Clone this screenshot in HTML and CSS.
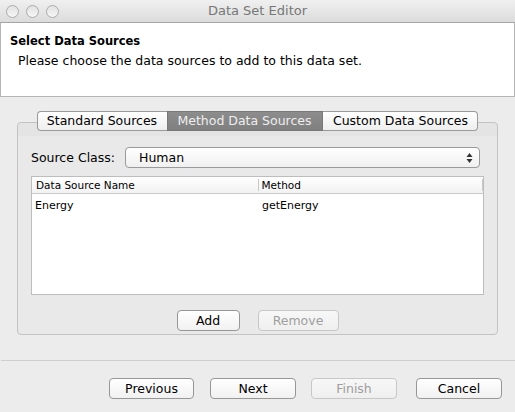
FILE: index.html
```html
<!DOCTYPE html>
<html>
<head>
<meta charset="utf-8">
<link rel="stylesheet" href="styles.css">
</head>
<body>
<div class="window">
  <div class="titlebar">
    <div class="lights">
      <span class="light"></span><span class="light"></span><span class="light"></span>
    </div>
    <div class="title">Data Set Editor</div>
  </div>
  <div class="header">
    <div class="h-title">Select Data Sources</div>
    <div class="h-sub">Please choose the data sources to add to this data set.</div>
  </div>
  <div class="content">
    <div class="tabs">
      <div class="tab tab-first">Standard Sources</div>
      <div class="tab tab-active">Method Data Sources</div>
      <div class="tab tab-last">Custom Data Sources</div>
    </div>
    <div class="panel">
      <div class="row-class">
        <span class="lbl">Source Class:</span>
        <div class="combo">
          <span class="combo-text">Human</span>
          <svg class="combo-arrows" width="7" height="12" viewBox="0 0 7 12">
            <path d="M3.5 1 L6.5 5 L0.5 5 Z" fill="#333"/>
            <path d="M3.5 11 L6.5 7 L0.5 7 Z" fill="#333"/>
          </svg>
        </div>
      </div>
      <div class="table">
        <div class="thead">
          <div class="th th-name">Data Source Name</div>
          <div class="th th-method">Method</div>
        </div>
        <div class="tr">
          <div class="td td-name">Energy</div>
          <div class="td td-method">getEnergy</div>
        </div>
      </div>
      <div class="panel-buttons">
        <button class="btn btn-add">Add</button>
        <button class="btn btn-remove disabled">Remove</button>
      </div>
    </div>
  </div>
  <div class="separator"></div>
  <div class="footer">
    <button class="btn btn-prev">Previous</button>
    <button class="btn btn-next">Next</button>
    <button class="btn btn-finish disabled">Finish</button>
    <button class="btn btn-cancel">Cancel</button>
  </div>
</div>
</body>
</html>
```

FILE: styles.css
```css
html, body {
  margin: 0;
  padding: 0;
  background: #ececec;
}
body {
  font-family: "DejaVu Sans", "Liberation Sans", sans-serif;
  font-size: 12px;
  color: #000;
}
.window {
  width: 515px;
  height: 412px;
  display: flex;
  flex-direction: column;
  background: #ececec;
  overflow: hidden;
}
.titlebar {
  flex: none;
  display: flex;
  align-items: center;
  position: relative;
  background: linear-gradient(#f0f0f0, #dcdcdc);
  border-bottom: 1px solid #a6a6a6;
  box-sizing: border-box;
  height: 23px;
}
.lights {
  display: flex;
  gap: 7px;
  padding-left: 6px;
  padding-top: 1px;
}
.light {
  width: 11px;
  height: 11px;
  border-radius: 50%;
  border: 1px solid #ababab;
  background: linear-gradient(#e2e2e2, #f6f6f6);
}
.title {
  position: absolute;
  left: 0;
  right: 0;
  text-align: center;
  font-size: 13px;
  color: #777;
  top: 3px;
}
.header {
  flex: none;
  background: #fff;
  border-left: 1px solid #b5b5b5;
  border-right: 1px solid #b5b5b5;
  border-bottom: 1px solid #b5b5b5;
  box-sizing: border-box;
  height: 74px;
  padding-top: 10px;
}
.h-title {
  font-weight: bold;
  font-size: 11.5px;
  padding-left: 9px;
  line-height: 16px;
}
.h-sub {
  font-size: 12.5px;
  padding-left: 17px;
  padding-top: 4px;
  line-height: 16px;
}
.content {
  flex: none;
  padding: 14px 17px 0 17px;
}
.tabs {
  display: flex;
  justify-content: center;
  height: 20px;
  margin-bottom: -9px;
  position: relative;
  z-index: 1;
  padding-right: 1px;
}
.tab {
  height: 20px;
  box-sizing: border-box;
  border: 1px solid #9a9a9a;
  background: linear-gradient(#ffffff, #eeeeee);
  font-size: 12.5px;
  line-height: 18px;
  text-align: center;
}
.tab-first {
  width: 130px;
  border-radius: 4px 0 0 4px;
  border-right: none;
}
.tab-active {
  width: 156px;
  background: linear-gradient(#8d8d8d, #7f7f7f);
  border-color: #787878;
  color: #eeeeee;
}
.tab-last {
  width: 155px;
  border-left: none;
  border-radius: 0 4px 4px 0;
  padding-left: 2px;
}
.panel {
  height: 213px;
  box-sizing: border-box;
  border: 1px solid #c3c3c3;
  border-radius: 4px;
  background: linear-gradient(#e4e4e4 0, #e4e4e4 13px, #e9e9e9 13px);
  padding: 24px 13px 0 13px;
  display: flex;
  flex-direction: column;
}
.row-class {
  display: flex;
  align-items: center;
  height: 21px;
}
.lbl {
  font-size: 12.5px;
  width: 94px;
}
.combo {
  width: 355px;
  height: 21px;
  box-sizing: border-box;
  border: 1px solid #9a9a9a;
  border-radius: 4px;
  background: linear-gradient(#ffffff, #f0f0f0);
  display: flex;
  align-items: center;
  justify-content: space-between;
  padding: 0 6px 0 13px;
  font-size: 12.5px;
}
.combo-arrows {
  display: block;
}
.table {
  margin-top: 8px;
  width: 453px;
  height: 119px;
  box-sizing: border-box;
  background: #fff;
  border: 1px solid #bdbdbd;
}
.thead {
  display: flex;
  height: 17px;
  box-sizing: border-box;
  border-bottom: 1px solid #c8c8c8;
  background: linear-gradient(#ffffff, #f2f2f2);
  font-size: 10.5px;
}
.th-name {
  width: 223px;
  padding-left: 4px;
  border-right: 1px solid #c8c8c8;
  margin: 2px 0;
  line-height: 12px;
}
.th-method {
  width: 222px;
  padding-left: 3px;
  border-right: 1px solid #c8c8c8;
  margin: 2px 0;
  line-height: 12px;
}
.tr {
  display: flex;
  font-size: 11px;
  line-height: 22px;
  padding-top: 1px;
}
.td-name {
  width: 224px;
  padding-left: 3px;
}
.td-method {
  padding-left: 3px;
}
.panel-buttons {
  display: flex;
  justify-content: center;
  gap: 18px;
  margin-top: 15px;
}
.btn {
  height: 21px;
  box-sizing: border-box;
  border: 1px solid #979797;
  border-radius: 4px;
  background: linear-gradient(#ffffff, #f1f1f1);
  font-family: "DejaVu Sans", "Liberation Sans", sans-serif;
  font-size: 12.5px;
  color: #000;
  padding: 0;
  line-height: 18px;
}
.btn.disabled {
  color: #9e9e9e;
  border-color: #c7c7c7;
  background: linear-gradient(#f7f7f7, #efefef);
}
.btn-add { width: 63px; }
.btn-remove { width: 81px; }
.separator {
  margin-top: 25px;
  height: 1px;
  background: #cfcfcf;
  margin-left: 1px;
}
.footer {
  display: flex;
  padding-top: 17px;
  padding-left: 109px;
}
.btn-prev { width: 85px; }
.btn-next { width: 86px; margin-left: 16px; }
.btn-finish { width: 86px; margin-left: 15px; }
.btn-cancel { width: 86px; margin-left: 19px; }
```
